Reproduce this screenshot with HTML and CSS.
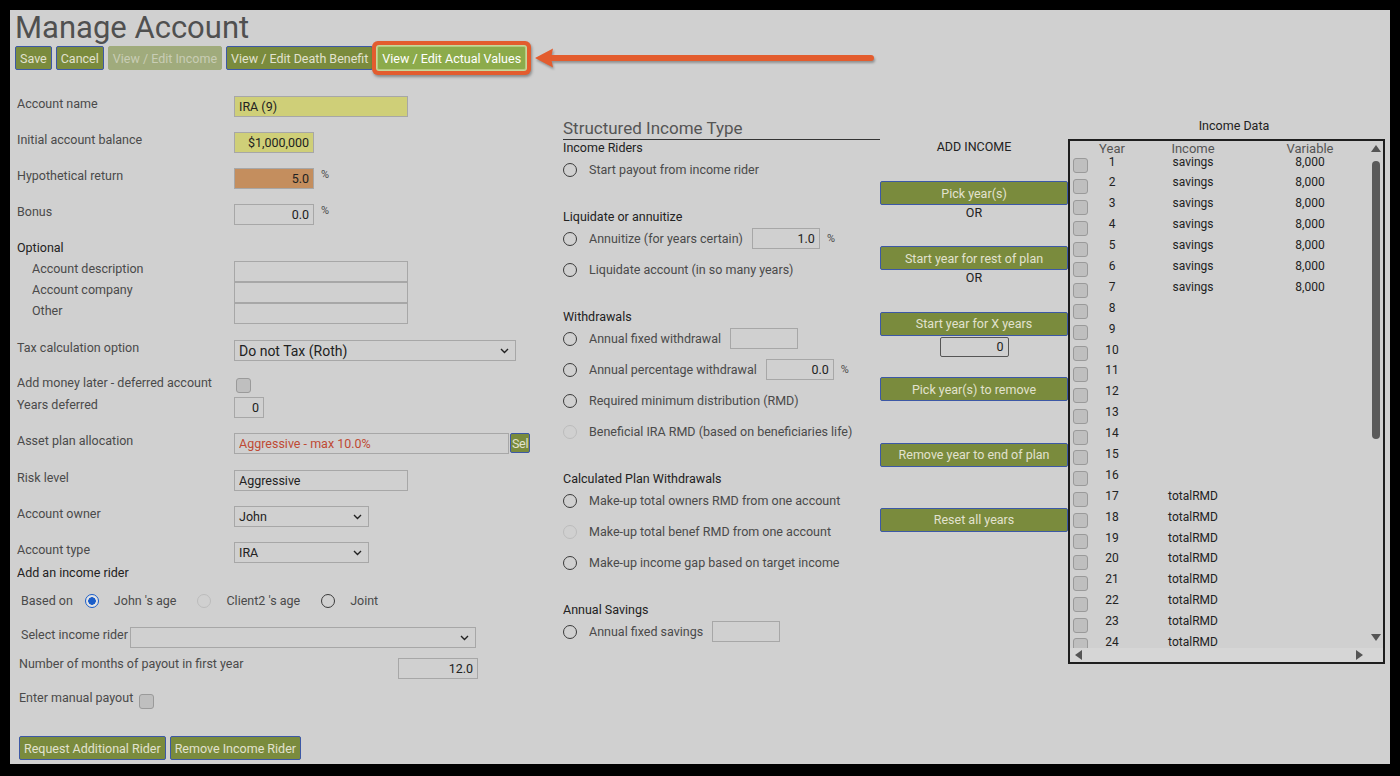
FILE: index.html
```html
<!DOCTYPE html>
<html lang="en">
<head>
  <meta charset="UTF-8">
  <title>Manage Account</title>
  <link rel="stylesheet" href="styles.css">
</head>
<body>
<div class="page">
  <h1 class="title">Manage Account</h1>
  <div class="toolbar">
    <button class="btn">Save</button>
    <button class="btn">Cancel</button>
    <button class="btn off">View / Edit Income</button>
    <button class="btn">View / Edit Death Benefit</button>
    <button class="btn hot">View / Edit Actual Values</button>
    <svg class="arrow" width="342" height="26" viewBox="0 0 342 26">
      <path d="M14 13 H336" stroke="#e35c2e" stroke-width="6" stroke-linecap="round"/>
      <polygon points="0,13 18,3.5 16,13 18,22.5" fill="#e35c2e"/>
    </svg>
  </div>

  <div class="main">
    <!-- account form -->
    <div class="col-form">
      <div class="frow"><label>Account name</label><input class="inp w174 yellow" value="IRA (9)"></div>
      <div class="frow"><label>Initial account balance</label><input class="inp w80 yellow num" value="$1,000,000"></div>
      <div class="frow"><label>Hypothetical return</label><input class="inp w80 tan num" value="5.0"><span class="pct">%</span></div>
      <div class="frow"><label>Bonus</label><input class="inp w80 num" value="0.0"><span class="pct">%</span></div>
      <div class="frow h21"><label class="strong">Optional</label></div>
      <div class="frow h21"><label class="sub">Account description</label><input class="inp w174"></div>
      <div class="frow h21"><label class="sub">Account company</label><input class="inp w174"></div>
      <div class="frow h37"><label class="sub">Other</label><input class="inp w174"></div>
      <div class="frow h35"><label>Tax calculation option</label>
        <div class="sel w282 big"><span>Do not Tax (Roth)</span><svg class="chev" width="9" height="6" viewBox="0 0 9 6"><path d="M1 1l3.5 3.5L8 1"/></svg></div>
      </div>
      <div class="frow h22"><label>Add money later - deferred account</label><input type="checkbox" class="chk deferred"></div>
      <div class="frow"><label>Years deferred</label><input class="inp w30 num" value="0"></div>
      <div class="frow h37"><label>Asset plan allocation</label><input class="inp w275 red" value="Aggressive - max 10.0%"><button class="btn pick">Sel</button></div>
      <div class="frow"><label>Risk level</label><input class="inp w174" value="Aggressive"></div>
      <div class="frow"><label>Account owner</label>
        <div class="sel w135"><span>John</span><svg class="chev" width="9" height="6" viewBox="0 0 9 6"><path d="M1 1l3.5 3.5L8 1"/></svg></div>
      </div>
      <div class="frow h23"><label>Account type</label>
        <div class="sel w135"><span>IRA</span><svg class="chev" width="9" height="6" viewBox="0 0 9 6"><path d="M1 1l3.5 3.5L8 1"/></svg></div>
      </div>
      <div class="frow h28"><label class="strong">Add an income rider</label></div>
      <div class="frow h34 based">
        <span>Based on</span>
        <input type="radio" name="age" class="rad first" checked><span>John 's age</span>
        <input type="radio" name="age" class="rad" disabled><span>Client2 's age</span>
        <input type="radio" name="age" class="rad"><span>Joint</span>
      </div>
      <div class="frow h29 rider"><label class="auto">Select income rider</label>
        <div class="sel w346"><span></span><svg class="chev" width="9" height="6" viewBox="0 0 9 6"><path d="M1 1l3.5 3.5L8 1"/></svg></div>
      </div>
      <div class="frow h34 months"><label>Number of months of payout in first year</label><input class="inp w80 num drop" value="12.0"></div>
      <div class="frow h46 months"><label class="auto">Enter manual payout</label><input type="checkbox" class="chk manual"></div>
      <div class="form-btns">
        <button class="btn">Request Additional Rider</button>
        <button class="btn">Remove Income Rider</button>
      </div>
    </div>

    <!-- structured income type -->
    <div class="col-types">
      <div class="types-head">Structured Income Type</div>

      <div class="grp">
        <div class="grp-title">Income Riders</div>
        <div class="opts">
          <label class="opt"><input type="radio" name="sit" class="rad">Start payout from income rider</label>
        </div>
      </div>

      <div class="grp">
        <div class="grp-title">Liquidate or annuitize</div>
        <div class="opts">
          <label class="opt"><input type="radio" name="sit" class="rad">Annuitize (for years certain)<input class="inp w68 num" value="1.0"><span class="pct">%</span></label>
          <label class="opt"><input type="radio" name="sit" class="rad">Liquidate account (in so many years)</label>
        </div>
      </div>

      <div class="grp">
        <div class="grp-title">Withdrawals</div>
        <div class="opts">
          <label class="opt"><input type="radio" name="sit" class="rad">Annual fixed withdrawal<input class="inp w68 num"></label>
          <label class="opt"><input type="radio" name="sit" class="rad">Annual percentage withdrawal<input class="inp w68 num" value="0.0"><span class="pct">%</span></label>
          <label class="opt"><input type="radio" name="sit" class="rad">Required minimum distribution (RMD)</label>
          <label class="opt"><input type="radio" name="sit" class="rad" disabled>Beneficial IRA RMD (based on beneficiaries life)</label>
        </div>
      </div>

      <div class="grp">
        <div class="grp-title">Calculated Plan Withdrawals</div>
        <div class="opts">
          <label class="opt"><input type="radio" name="sit" class="rad">Make-up total owners RMD from one account</label>
          <label class="opt"><input type="radio" name="sit" class="rad" disabled>Make-up total benef RMD from one account</label>
          <label class="opt"><input type="radio" name="sit" class="rad">Make-up income gap based on target income</label>
        </div>
      </div>

      <div class="grp">
        <div class="grp-title">Annual Savings</div>
        <div class="opts">
          <label class="opt"><input type="radio" name="sit" class="rad">Annual fixed savings<input class="inp w68 num"></label>
        </div>
      </div>
    </div>

    <!-- add income actions -->
    <div class="col-actions">
      <div class="add-title">ADD INCOME</div>
      <div class="slot"><button class="btn wide">Pick year(s)</button><div class="or">OR</div></div>
      <div class="slot"><button class="btn wide">Start year for rest of plan</button><div class="or">OR</div></div>
      <div class="slot"><button class="btn wide">Start year for X years</button><input class="years-inp num" value="0"></div>
      <div class="slot"><button class="btn wide">Pick year(s) to remove</button></div>
      <div class="slot"><button class="btn wide">Remove year to end of plan</button></div>
      <div class="slot"><button class="btn wide">Reset all years</button></div>
    </div>

    <!-- income data -->
    <div class="col-data">
      <div class="data-title">Income Data</div>
      <div class="data-box">
        <div class="data-main">
          <div class="rows" id="rows">
            <div class="dhead"><span></span><span>Year</span><span>Income</span><span>Variable</span></div>
          </div>
          <div class="vscroll">
            <svg class="up" width="10" height="7" viewBox="0 0 10 7"><polygon points="5,0 10,7 0,7"/></svg>
            <div class="thumb"></div>
            <svg class="down" width="10" height="7" viewBox="0 0 10 7"><polygon points="0,0 10,0 5,7"/></svg>
          </div>
        </div>
        <div class="hscroll">
          <svg width="7" height="10" viewBox="0 0 7 10"><polygon points="0,5 7,0 7,10"/></svg>
          <svg width="7" height="10" viewBox="0 0 7 10"><polygon points="0,0 7,5 0,10"/></svg>
        </div>
      </div>
    </div>
  </div>
</div>

<script>
  const rows = document.getElementById('rows');
  for (let y = 1; y <= 24; y++) {
    let income = '', variable = '';
    if (y <= 7) { income = 'savings'; variable = '8,000'; }
    else if (y >= 17) { income = 'totalRMD'; }
    const row = document.createElement('div');
    row.className = 'drow';
    row.innerHTML = '<span><input type="checkbox" class="chk"></span>' +
      '<span>' + y + '</span><span>' + income + '</span><span>' + variable + '</span>';
    rows.appendChild(row);
  }
</script>
</body>
</html>
```

FILE: styles.css
```css
* { box-sizing: border-box; }
body {
  margin: 0;
  background: #000;
  font-family: Roboto, "Liberation Sans", Arial, sans-serif;
  font-size: 12.5px;
  color: #4a4a4a;
}
.page {
  margin: 10px;
  width: 1380px;
  height: 754px;
  background: #d0d0d0;
  overflow: hidden;
}
.title {
  margin: 0;
  padding-left: 5px;
  height: 36px;
  font-size: 31px;
  line-height: 36px;
  font-weight: 400;
  color: #505050;
}

/* buttons */
.btn {
  height: 24px;
  padding: 0 4px;
  border: 1px solid #3c58a6;
  border-radius: 2px;
  background: #7a8b3d;
  color: #e2e2cf;
  font-family: inherit;
  font-size: 12.5px;
  white-space: nowrap;
  cursor: pointer;
}
.btn.off { background: #a0ab7c; border-color: #a0ab7c; color: #c9cdb5; }
.btn.hot {
  background: #8cab4b;
  border-color: #b4c980;
  color: #fff;
  box-shadow: 0 0 0 1px #c5d79a, 0 0 0 5px #e35c2e, 1px 2px 3px 5px rgba(0,0,0,.35);
}
.btn.wide { display: block; width: 188px; margin: 0 auto; }
.btn.pick {
  width: 20px;
  height: 20px;
  margin-left: 1px;
  padding: 0 0 0 1px;
  overflow: hidden;
  text-align: left;
  letter-spacing: -0.3px;
}

.toolbar {
  display: flex;
  align-items: center;
  gap: 4px;
  padding-left: 5px;
  height: 24px;
}
.arrow { margin-left: 5px; filter: drop-shadow(1px 2px 1px rgba(0,0,0,.3)); }

.main { display: flex; align-items: flex-start; margin-top: 10px; }

/* form inputs */
.inp {
  height: 21px;
  padding: 0 4px;
  border: 1px solid #a7a7a7;
  background: transparent;
  font-family: inherit;
  font-size: 12.5px;
  color: #222;
}
.num { text-align: right; }
.yellow { background: #cfcf78; }
.tan { background: #c48e5e; }
.red { color: #bf4a34; }
.w30 { width: 30px; }
.w68 { width: 68px; }
.w80 { width: 80px; }
.w135 { width: 135px; }
.w174 { width: 174px; }
.w275 { width: 275px; }
.w282 { width: 282px; }
.w346 { width: 346px; }
.pct { margin-left: 7px; font-size: 11px; line-height: 14px; }

.sel {
  display: flex;
  align-items: center;
  justify-content: space-between;
  height: 21px;
  padding: 0 6px 0 4px;
  border: 1px solid #a7a7a7;
  color: #222;
}
.sel.big { font-size: 14px; }
.chev { fill: none; stroke: #222; stroke-width: 1.4; }

.chk {
  appearance: none;
  display: block;
  width: 15px;
  height: 15px;
  margin: 0;
  border: 1.5px solid #9a9a9a;
  border-radius: 3px;
  background: #bfbfbf;
}
.rad {
  appearance: none;
  flex-shrink: 0;
  width: 14px;
  height: 14px;
  margin: 0;
  border: 1.5px solid #3a3a3a;
  border-radius: 50%;
  background: transparent;
}
.rad:checked {
  border-color: #1a5dc9;
  background: radial-gradient(circle, #1a5dc9 0 3.5px, #e4e4e4 4px);
}
.rad:disabled { border-color: #bcbcbc; }

/* left column */
.col-form { width: 553px; padding: 16px 0 0 7px; flex-shrink: 0; }
.frow { display: flex; align-items: flex-start; height: 36px; }
.frow > label { width: 217px; flex-shrink: 0; line-height: 16px; }
.frow > label.sub { padding-left: 15px; }
.frow > label.strong { color: #222; }
.frow > label.auto { width: auto; }
.h21 { height: 21px; }
.h22 { height: 22px; }
.h23 { height: 23px; }
.h28 { height: 28px; }
.h29 { height: 29px; }
.h34 { height: 34px; }
.h35 { height: 35px; }
.h37 { height: 37px; }
.h46 { height: 46px; }
.chk.deferred { margin: 3px 0 0 2px; }
.based { padding-left: 4px; line-height: 16px; }
.based .rad { margin: 1px 15px 0 21px; }
.based .rad.first { margin-left: 12px; }
.rider { padding-left: 4px; }
.rider label { margin-right: 2px; }
.months { padding-left: 2px; }
.months label { width: 379px; }
.inp.drop { margin-top: 2px; }
.chk.manual { margin: 4px 0 0 6px; }
.form-btns { display: flex; gap: 4px; padding-left: 2px; }

/* middle column */
.col-types { width: 317px; padding-top: 38px; flex-shrink: 0; }
.types-head {
  height: 22px;
  line-height: 21px;
  font-size: 17px;
  color: #555;
  border-bottom: 1px solid #333;
  margin-bottom: 1px;
}
.grp { margin-bottom: 25px; }
.grp-title { line-height: 14px; color: #222; }
.opts { margin-top: -1px; }
.opt { display: flex; align-items: center; height: 31px; white-space: nowrap; }
.opt .rad { margin: 0 12px 0 0; }
.opt .inp { margin-left: 9px; }

/* add income column */
.col-actions { width: 188px; padding-top: 59px; text-align: center; flex-shrink: 0; }
.add-title { line-height: 16px; color: #222; margin-bottom: 26px; }
.slot { height: 65.4px; }
.or { line-height: 16px; color: #222; }
.years-inp {
  display: block;
  width: 69px;
  height: 20px;
  margin: 1px auto 0;
  padding: 0 4px;
  border: 1px solid #555;
  border-radius: 2px;
  background: transparent;
  font-family: inherit;
  font-size: 12.5px;
  color: #222;
}

/* income data */
.col-data { width: 322px; padding-top: 38px; }
.data-title { line-height: 16px; text-align: center; padding-left: 10px; color: #222; margin-bottom: 5px; }
.data-box {
  width: 317px;
  height: 525px;
  border: 2px solid #1e1e1e;
  display: flex;
  flex-direction: column;
}
.data-main { display: flex; height: 507px; }
.rows { width: 296px; overflow: hidden; }
.dhead, .drow {
  display: grid;
  grid-template-columns: 22px 40px 122px 112px;
  text-align: center;
}
.dhead { height: 10.5px; line-height: 15px; font-size: 13px; color: #555; }
.drow { height: 20.9px; line-height: 20.9px; font-size: 12px; color: #222; }
.drow .chk { margin: 6.5px 0 0 3px; }
.vscroll {
  width: 17px;
  padding-left: 3px;
  display: flex;
  flex-direction: column;
  align-items: center;
  fill: #555;
}
.vscroll .up { margin-top: 4px; }
.thumb { width: 8px; height: 278px; margin-top: 9px; border-radius: 4px; background: #5a5a5a; }
.vscroll .down { margin-top: auto; margin-bottom: 7px; }
.hscroll {
  height: 14px;
  display: flex;
  justify-content: space-between;
  align-items: center;
  padding: 0 20px 0 5px;
  background: #d6d6d6;
  fill: #555;
}
```
